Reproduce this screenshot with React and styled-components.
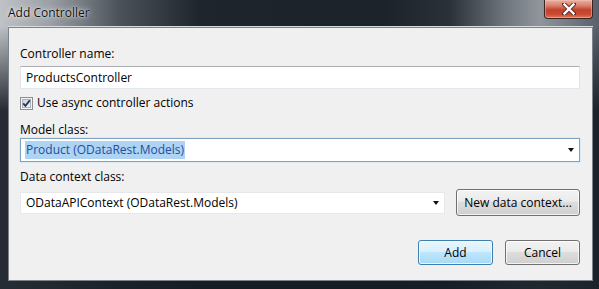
import React from "react";
import styled, { createGlobalStyle } from "styled-components";

const GlobalStyle = createGlobalStyle`
  html, body {
    margin: 0;
    padding: 0;
    background: #1d242c;
  }
  * {
    box-sizing: border-box;
  }
`;

const Window = styled.div`
  width: 599px;
  height: 289px;
  display: flex;
  flex-direction: column;
  font-family: "Open Sans", "Noto Sans", sans-serif;
  font-size: 12px;
  color: #000;
  background:
    linear-gradient(180deg, rgba(22, 28, 35, 0) 0px, rgba(22, 28, 35, 0) 26px, rgba(22, 28, 35, 0.9) 110px),
    linear-gradient(90deg, #bfc3c7 0px, #9ba0a6 50px, #4a5159 120px, #1e252d 200px, #1b2229 380px, #2a3139 450px, #6f757c 505px, #8f959b 540px, #59606a 599px);
`;

const TitleBar = styled.div`
  height: 27px;
  display: flex;
  align-items: flex-start;
  justify-content: space-between;
  padding: 0 6px 0 8px;
`;

const Title = styled.div`
  margin-top: 4px;
  font-size: 12px;
  color: #111;
  text-shadow: 0 0 6px rgba(255, 255, 255, 0.9), 0 0 2px rgba(255, 255, 255, 0.8);
`;

const CloseButton = styled.div`
  width: 49px;
  height: 19px;
  display: flex;
  align-items: center;
  justify-content: center;
  border: 1px solid #3b2420;
  border-top: none;
  border-radius: 0 0 4px 4px;
  background: linear-gradient(180deg, #e9b0a2 0%, #d9836e 30%, #c3412b 55%, #c94a32 80%, #e07a5c 100%);
  box-shadow: inset 0 0 0 1px rgba(255, 200, 190, 0.45);
`;

const Client = styled.div`
  flex: 1;
  margin: 0 6px 8px 8px;
  background: #f0f0f0;
  border: 1px solid #7d838a;
  box-shadow: 0 -1px 0 #d8dcdf;
  padding: 18px 12px 0 11px;
  display: flex;
  flex-direction: column;
`;

const Label = styled.div`
  height: 16px;
  line-height: 16px;
  margin-top: ${(p) => p.$top || 0}px;
`;

const TextBox = styled.div`
  height: 23px;
  margin-top: 4px;
  display: flex;
  align-items: center;
  padding-left: 5px;
  background: #fff;
  border: 1px solid #e2e3ea;
  border-top-color: #abadb3;
  border-bottom-color: #e3e9ef;
`;

const CheckRow = styled.label`
  display: flex;
  align-items: center;
  gap: 4px;
  height: 16px;
  margin-top: 6px;
  line-height: 16px;
`;

const Combo = styled.div`
  height: ${(p) => p.$h || 23}px;
  ${(p) => (p.$grow ? "flex: 1;" : "")}
  margin-top: ${(p) => p.$top || 0}px;
  display: flex;
  align-items: center;
  justify-content: space-between;
  padding: 0 4px 0 4px;
  background: #fff;
  border: 1px solid ${(p) => (p.$focused ? "#7fa3c4" : "#e6e8ec")};
  box-shadow: ${(p) => (p.$focused ? "0 0 0 1px #dbeaf7" : "none")};
`;

const Selected = styled.span`
  background: #aed3f3;
  color: #1f4f9e;
  padding: 1px 1px 1px 1px;
  line-height: 16px;
`;

const ComboText = styled.span`
  padding-left: 1px;
`;

const Arrow = styled.span`
  width: 0;
  height: 0;
  margin-right: 1px;
  border-left: 3.5px solid transparent;
  border-right: 3.5px solid transparent;
  border-top: 4px solid #111;
`;

const ContextRow = styled.div`
  display: flex;
  align-items: center;
  gap: 11px;
  margin-top: 4px;
`;

const Button = styled.button`
  height: ${(p) => p.$h || 25}px;
  width: ${(p) => p.$w}px;
  font-family: inherit;
  font-size: 12px;
  color: #000;
  padding: 0;
  border-radius: 3px;
  border: 1px solid ${(p) => (p.$default ? "#3c7fb1" : "#707070")};
  background: ${(p) =>
    p.$default
      ? "linear-gradient(180deg, #eaf6fd 0%, #d9f0fc 45%, #bee6fd 50%, #a7d9f5 100%)"
      : "linear-gradient(180deg, #f2f2f2 0%, #ebebeb 45%, #dddddd 50%, #cfcfcf 100%)"};
  box-shadow: inset 0 0 0 1px rgba(255, 255, 255, 0.75);
`;

const ButtonRow = styled.div`
  display: flex;
  justify-content: flex-end;
  gap: 12px;
  margin-top: 24px;
`;

const CloseIcon = () => (
  <svg width="14" height="12" viewBox="0 0 14 12">
    <path d="M2 1 L12 11 M12 1 L2 11" stroke="#5a2a22" strokeWidth="4.2" strokeLinecap="square" />
    <path d="M2.5 1.5 L11.5 10.5 M11.5 1.5 L2.5 10.5" stroke="#fff" strokeWidth="2.4" strokeLinecap="square" />
  </svg>
);

const CheckBox = () => (
  <svg width="13" height="13" viewBox="0 0 13 13">
    <defs>
      <linearGradient id="cbg" x1="0" y1="0" x2="1" y2="1">
        <stop offset="0" stopColor="#cbcfd5" />
        <stop offset="1" stopColor="#f6f6f6" />
      </linearGradient>
    </defs>
    <rect x="0.5" y="0.5" width="12" height="12" fill="#f4f4f4" stroke="#8e8f8f" />
    <rect x="2.5" y="2.5" width="8" height="8" fill="url(#cbg)" stroke="#aeb3b9" />
    <path d="M3.2 6.4 L5.4 8.8 L9.8 3.4" fill="none" stroke="#1f3a70" strokeWidth="1.9" />
  </svg>
);

export default function App() {
  return (
    <>
      <GlobalStyle />
      <Window>
        <TitleBar>
          <Title>Add Controller</Title>
          <CloseButton>
            <CloseIcon />
          </CloseButton>
        </TitleBar>
        <Client>
          <Label>Controller name:</Label>
          <TextBox>ProductsController</TextBox>
          <CheckRow>
            <CheckBox />
            Use async controller actions
          </CheckRow>
          <Label $top={11}>Model class:</Label>
          <Combo $focused $h={24}>
            <Selected>Product (ODataRest.Models)</Selected>
            <Arrow />
          </Combo>
          <Label $top={7}>Data context class:</Label>
          <ContextRow>
            <Combo $grow $h={22}>
              <ComboText>ODataAPIContext (ODataRest.Models)</ComboText>
              <Arrow />
            </Combo>
            <Button $w={124} $h={27}>New data context...</Button>
          </ContextRow>
          <ButtonRow>
            <Button $default $w={75}>Add</Button>
            <Button $w={75}>Cancel</Button>
          </ButtonRow>
        </Client>
      </Window>
    </>
  );
}
